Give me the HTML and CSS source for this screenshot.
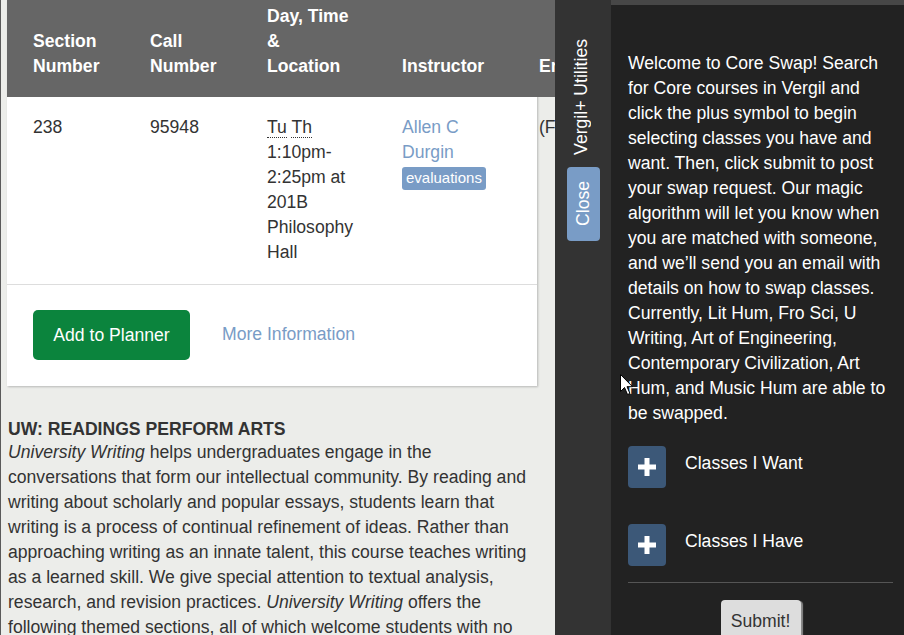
FILE: index.html
```html
<!DOCTYPE html>
<html lang="en">
<head>
<meta charset="utf-8">
<title>Vergil+ Core Swap</title>
<link rel="stylesheet" href="styles.css">
</head>
<body>
<main class="page">
  <div class="card">
    <table class="sections">
      <thead>
        <tr>
          <th class="w1">Section Number</th>
          <th class="w2">Call Number</th>
          <th class="w3">Day, Time &amp; Location</th>
          <th class="w4">Instructor</th>
          <th class="w5">Enrollment</th>
        </tr>
      </thead>
      <tbody>
        <tr>
          <td>238</td>
          <td>95948</td>
          <td><abbr title="Tuesday">Tu</abbr> <abbr title="Thursday">Th</abbr><br>1:10pm-2:25pm at 201B Philosophy Hall</td>
          <td><a class="link" href="#">Allen C Durgin</a><br><span class="label">evaluations</span></td>
          <td>(Full)</td>
        </tr>
      </tbody>
    </table>
    <div class="actions">
      <button class="btn-add" type="button">Add to Planner</button>
      <a class="link more" href="#">More Information</a>
    </div>
  </div>
  <section class="desc">
    <h3 class="desc-title">UW: READINGS PERFORM ARTS</h3>
    <p class="desc-text"><em>University Writing</em> helps undergraduates engage in the conversations that form our intellectual community. By reading and writing about scholarly and popular essays, students learn that writing is a process of continual refinement of ideas. Rather than approaching writing as an innate talent, this course teaches writing as a learned skill. We give special attention to textual analysis, research, and revision practices. <em>University Writing</em> offers the following themed sections, all of which welcome students with no prior experience in the field.</p>
  </section>
</main>
<aside class="tab">
  <div class="tab-title">Vergil+ Utilities</div>
  <button class="close" type="button"><span>Close</span></button>
</aside>
<aside class="panel">
  <p class="intro">Welcome to Core Swap! Search for Core courses in Vergil and click the plus symbol to begin selecting classes you have and want. Then, click submit to post your swap request. Our magic algorithm will let you know when you are matched with someone, and we’ll send you an email with details on how to swap classes. Currently, Lit Hum, Fro Sci, U Writing, Art of Engineering, Contemporary Civilization, Art Hum, and Music Hum are able to be swapped.</p>
  <div class="swap-row">
    <button class="plus" type="button" aria-label="Add"><svg width="18" height="18" viewBox="0 0 18 18"><path d="M6.5 0h5v6.5H18v5h-6.5V18h-5v-6.5H0v-5h6.5z" fill="#fff"/></svg></button>
    <span class="swap-label">Classes I Want</span>
  </div>
  <div class="swap-row">
    <button class="plus" type="button" aria-label="Add"><svg width="18" height="18" viewBox="0 0 18 18"><path d="M6.5 0h5v6.5H18v5h-6.5V18h-5v-6.5H0v-5h6.5z" fill="#fff"/></svg></button>
    <span class="swap-label">Classes I Have</span>
  </div>
  <hr class="rule">
  <div class="submit-wrap"><button class="submit" type="button">Submit!</button></div>
</aside>
<svg class="cursor" width="13" height="21" viewBox="0 0 13 21"><path d="M0.5 0.5v17l4-4 3 7 2.5-1-3-6.8h5.5z" fill="#fff" stroke="#000" stroke-width="1"/></svg>
</body>
</html>
```
FILE: styles.css
```css
* { box-sizing: border-box; }
html, body { margin: 0; padding: 0; }
body {
  display: flex;
  width: 904px;
  height: 635px;
  overflow: hidden;
  font-family: "Liberation Sans", Arial, sans-serif;
  font-size: 17.6px;
  line-height: 25px;
  color: #333;
  position: relative;
}
.page {
  width: 555px;
  flex: none;
  background: #ecedea;
  border-left: 1px solid #5a5a5a;
  padding-left: 6px;
  overflow: hidden;
}
.card {
  width: 530px;
  background: #fff;
  box-shadow: 1px 1px 2px rgba(0,0,0,0.22);
}
.sections {
  border-collapse: collapse;
  table-layout: fixed;
  width: 690px;
}
.w1 { width: 118px; }
.w2 { width: 117px; }
.w3 { width: 135px; }
.w4 { width: 137px; }
.w5 { width: 183px; }
.sections th {
  background: #666;
  color: #fff;
  font-weight: bold;
  text-align: left;
  vertical-align: bottom;
  height: 97px;
  padding: 0 25px 18px 25px;
}
.sections th:first-child, .sections td:first-child { padding-left: 26px; }
.sections td {
  vertical-align: top;
  padding: 18px 25px 19px 25px;
}
abbr {
  text-decoration: none;
  border-bottom: 1px dotted #333;
}
.link {
  color: #799cc6;
  text-decoration: none;
}
.label {
  display: inline-block;
  background: #799cc6;
  color: #fff;
  font-size: 15px;
  line-height: 20px;
  padding: 1px 4px 2px 4px;
  border-radius: 3px;
  margin-top: 1px;
}
.actions {
  border-top: 1px solid #ddd;
  display: flex;
  align-items: center;
  padding: 25px 0 26px 26px;
}
.btn-add {
  width: 157px;
  height: 50px;
  background: #0b843d;
  color: #fff;
  border: none;
  border-radius: 5px;
  font-family: inherit;
  font-size: 17.6px;
  padding: 0;
}
.more { margin-left: 32px; margin-top: -2px; }
.desc { width: 531px; padding-left: 1px; padding-top: 31px; }
.desc-title {
  margin: 0;
  font-size: 17.6px;
  line-height: 25px;
  font-weight: bold;
}
.desc-text { margin: -2px 0 0 0; }
.tab {
  width: 56px;
  flex: none;
  background: #333;
  display: flex;
  flex-direction: column;
  align-items: center;
  padding-top: 39px;
}
.tab-title {
  writing-mode: vertical-rl;
  transform: rotate(180deg);
  color: #fff;
  line-height: 20px;
  margin-left: -4px;
}
.close {
  margin-top: 12px;
  width: 33px;
  height: 74px;
  background: #799cc6;
  border: none;
  border-radius: 4px;
  color: #fff;
  font-family: inherit;
  font-size: 17.6px;
  padding: 0;
  display: flex;
  align-items: center;
  justify-content: center;
}
.close span {
  writing-mode: vertical-rl;
  transform: rotate(180deg);
}
.panel {
  flex: 1;
  background: #222;
  border-top: 5px solid #474747;
  padding: 46px 11px 0 17px;
  color: #fff;
}
.intro { margin: 0; }
.swap-row {
  display: flex;
  align-items: flex-start;
  margin-top: 20px;
}
.swap-row + .swap-row { margin-top: 36px; }
.plus {
  width: 38px;
  height: 42px;
  background: #3c5878;
  border: none;
  border-radius: 4px;
  display: flex;
  align-items: center;
  justify-content: center;
  padding: 0;
  flex: none;
}
.swap-label {
  margin-left: 19px;
  margin-top: 5px;
}
.rule {
  border: none;
  border-top: 1px solid #555;
  margin: 16px 0 0 0;
}
.submit-wrap {
  display: flex;
  justify-content: center;
  padding-top: 17px;
}
.submit {
  width: 80px;
  height: 42px;
  background: #ddd;
  border: none;
  border-radius: 4px;
  box-shadow: 2px 1px 1px #8a8a8a;
  color: #333;
  font-family: inherit;
  font-size: 17.6px;
  padding: 0;
}
.cursor {
  position: absolute;
  left: 620px;
  top: 374px;
}
```
